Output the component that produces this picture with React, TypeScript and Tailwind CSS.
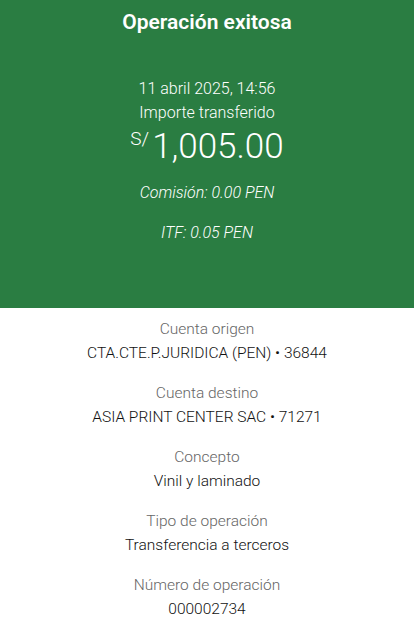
import React from "react";

const details = [
  { label: "Cuenta origen", value: "CTA.CTE.P.JURIDICA (PEN) • 36844" },
  { label: "Cuenta destino", value: "ASIA PRINT CENTER SAC • 71271" },
  { label: "Concepto", value: "Vinil y laminado" },
  { label: "Tipo de operación", value: "Transferencia a terceros" },
  { label: "Número de operación", value: "000002734" },
];

export default function App() {
  return (
    <div className="w-[414px] h-[629px] bg-white font-['Roboto',sans-serif] overflow-hidden">
      {/* Header */}
      <div className="h-[308px] bg-[#2a7d42] text-white flex flex-col items-center">
        <h1 className="mt-[9px] text-[21px] leading-[26px] font-semibold">Operación exitosa</h1>
        <p className="mt-[42px] text-[16px] leading-[24px] font-light">11 abril 2025, 14:56</p>
        <p className="text-[16px] leading-[24px] font-light">Importe transferido</p>
        <div className="mt-[2px] flex items-start">
          <span className="text-[19px] leading-[22px] font-light mt-[1px] mr-[3px]">S/</span>
          <span className="text-[35px] leading-[40px] font-light">1,005.00</span>
        </div>
        <p className="mt-[14px] text-[16px] leading-[24px] font-light italic">Comisión: 0.00 PEN</p>
        <p className="mt-[16px] text-[16px] leading-[24px] font-light italic">ITF: 0.05 PEN</p>
      </div>

      {/* Details */}
      <div className="flex flex-col items-center pt-[10px]">
        {details.map((d) => (
          <div key={d.label} className="flex flex-col items-center h-[64px]">
            <p className="text-[15.5px] leading-[22px] font-light text-[#666666]">{d.label}</p>
            <p className="mt-[2px] text-[15.5px] leading-[22px] text-[#121212] font-light">{d.value}</p>
          </div>
        ))}
      </div>
    </div>
  );
}
